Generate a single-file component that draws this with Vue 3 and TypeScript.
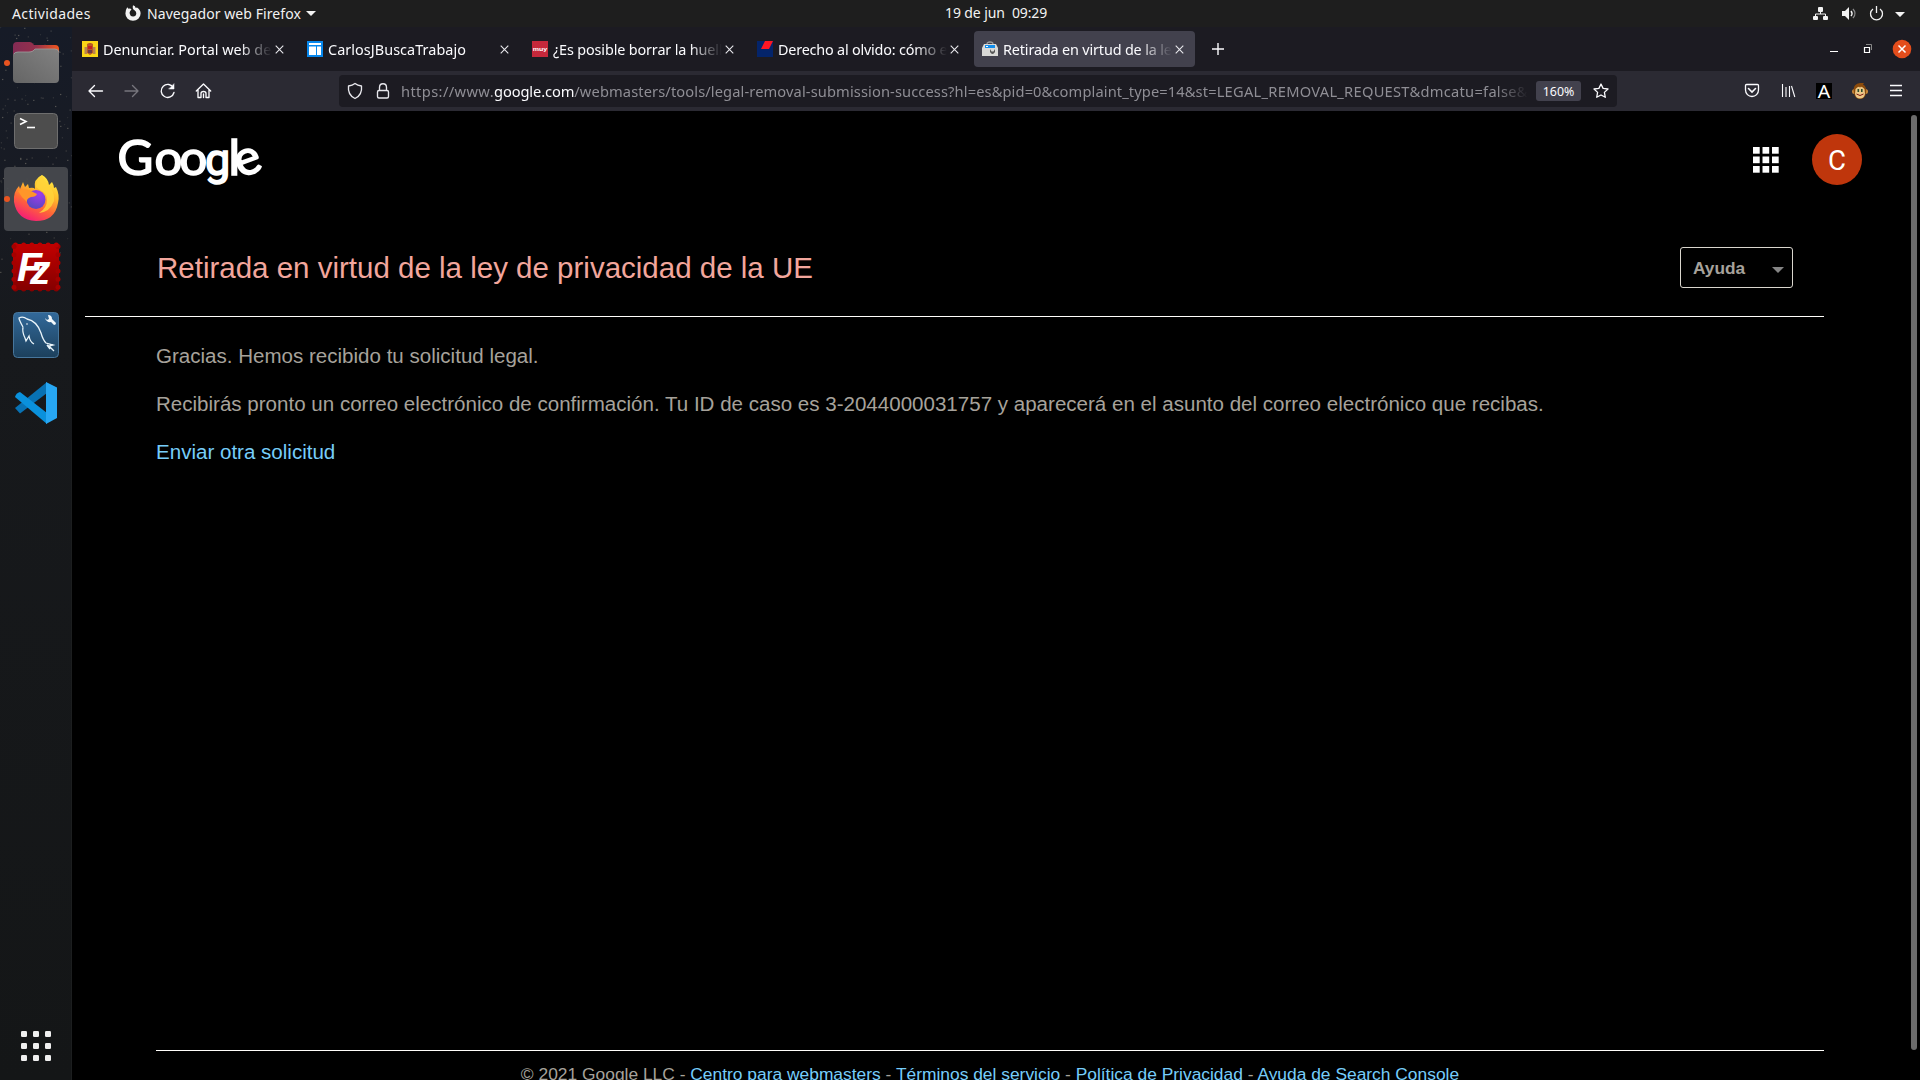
<script setup lang="ts">
interface Tab {
  icon: string
  title: string
  spacing: number
  active?: boolean
}

const tabs: Tab[] = [
  { icon: 'spain', title: 'Denunciar. Portal web de', spacing: 0 },
  { icon: 'grid', title: 'CarlosJBuscaTrabajo', spacing: 0.06 },
  { icon: 'muy', title: '¿Es posible borrar la huella', spacing: -0.14 },
  { icon: 'blue', title: 'Derecho al olvido: cómo el', spacing: -0.2 },
  { icon: 'tools', title: 'Retirada en virtud de la ley', spacing: -0.15, active: true },
]
const nine = Array.from({ length: 9 }, (_, i) => ({ x: i % 3, y: Math.floor(i / 3) }))
const stars = Array.from({ length: 130 }, (_, i) => ({
  x: (i * 47.3 + (i * i * 13) % 31) % 72,
  y: (i * 31.7 + (i * i * 7) % 53) % (i % 4 ? 180 : 260),
  o: 0.12 + ((i * 17) % 10) / 28,
}))
const scallops = Array.from({ length: 6 }, (_, i) => i * 8)
const footer: string[] = ['Centro para webmasters', 'Términos del servicio', 'Política de Privacidad', 'Ayuda de Search Console']
</script>

<template>
  <div class="screen">
    <header class="topbar">
      <span class="activities">Actividades</span>
      <svg class="ffmono" width="16" height="16" viewBox="0 0 16 16"><path fill-rule="evenodd" d="M8 .2Q10.500 1 10.700 3L12 2.500Q15.700 5 15.600 8.500A7.600 7.300 0 0 1 .4 8.500Q.4 5 2.200 2.200L3.500 3.800Q5.500 3 6.500 4.500L5.200 6Q4.200 7.500 4.800 9A3.300 3.300 0 0 0 11.300 8.500Q11.500 6.500 9.500 5.300Q7 4 8 .2Z" fill="#f2f2f2" /></svg>
      <span class="appname">Navegador web Firefox</span>
      <i class="caret"></i>
      <span class="clock">19 de jun&nbsp; 09:29</span>
      <svg class="status" width="95" height="16" viewBox="0 0 95 16">
        <g fill="#f2f2f2"><rect x="5" y="1" width="5" height="5" rx="1" /><rect x="0" y="10" width="5" height="4" rx="1" /><rect x="10" y="10" width="5" height="4" rx="1" /><path d="M29 5h3l4-4v13l-4-4h-3zM82 6h10l-5 5z" /></g>
        <path d="M7.500 5v3M2.500 10V8h10v2" stroke="#f2f2f2" fill="none" />
        <path d="M38 5q2 2.500 0 5" stroke="#f2f2f2" stroke-width="1.500" fill="none" /><path d="M40 3q4 4.500 0 9" stroke="#888" stroke-width="1.300" fill="none" />
        <path d="M60 3a6 6 0 1 0 7 0M63.500 0v7" stroke="#f2f2f2" stroke-width="1.300" fill="none" />
      </svg>
    </header>

    <div class="desktop">
      <aside class="dock">
        <svg width="72" height="1053" viewBox="0 27 72 1053">
          <defs>
            <linearGradient id="fold" x2="1"><stop stop-color="#832b54" /><stop offset=".5" stop-color="#95304c" /><stop offset="1" stop-color="#f2571e" /></linearGradient>
            <linearGradient id="gray" x1="0" y1="1" x2="1" y2="0"><stop stop-color="#656565" /><stop offset="1" stop-color="#818181" /></linearGradient>
            <linearGradient id="fox" x1=".8" y1="0" x2=".3" y2="1"><stop stop-color="#fff044" /><stop offset=".35" stop-color="#ffbd2b" /><stop offset=".65" stop-color="#ff6836" /><stop offset="1" stop-color="#f51979" /></linearGradient>
            <radialGradient id="globe" cx=".65" cy=".2" r=".9"><stop stop-color="#a13bed" /><stop offset="1" stop-color="#5349bb" /></radialGradient>
            <linearGradient id="red" x2="0" y2="1"><stop stop-color="#c20000" /><stop offset="1" stop-color="#850000" /></linearGradient>
            <linearGradient id="sql" x2="0" y2="1"><stop stop-color="#32699a" /><stop offset="1" stop-color="#1c405c" /></linearGradient>
            <linearGradient id="sky" x2="0" y2="1"><stop stop-color="#161b27" /><stop offset=".16" stop-color="#181b23" /><stop offset=".3" stop-color="#17191c" /><stop offset="1" stop-color="#141617" /></linearGradient>
          </defs>
          <rect y="27" width="72" height="1053" fill="url(#sky)" />
          <g fill="#b0aa96"><rect v-for="(s, i) in stars" :key="i" :x="s.x" :y="27 + s.y" width="1.200" height="1.200" :opacity="s.o" /></g>
          <rect x="4" y="167" width="64" height="64" rx="4" fill="#47494e" opacity=".94" />
          <g fill="#e95420"><circle cx="7" cy="63" r="3" /><circle cx="7" cy="199" r="3" /></g>

          <path d="M13 55V46q0-4 4-4h13q2 0 4 3h21q4 0 4 4v8H13Z" fill="url(#fold)" />
          <path d="M13 56q0-4 4-4h12q2 0 4-1l2-2h20q4 0 4 4v26q0 4-4 4H17q-4 0-4-4Z" fill="url(#gray)" />
          <path d="M14 54q1-2 4-2h11q2 0 4-1l2-2h20q3 0 4 3" fill="none" stroke="#a0a0a0" stroke-width=".8" />

          <rect x="14.500" y="113.500" width="43" height="35" rx="4" fill="#4d4d4d" stroke="#6e6e6e" />
          <path d="M20 118.500l6 3-6 3" fill="none" stroke="#fff" stroke-width="1.600" /><path d="M27 127.500h8" stroke="#fff" stroke-width="1.600" />

          <path d="M42 175Q48 178 49 185L52 182Q54 185 54 188L56 187Q60 195 58 203Q55 221 36 221Q17 220 14 202Q13 192 19 186L20 189L23 182L25 187L28 184L29 188Q34 187 35 189Q33 179 42 175Z" fill="url(#fox)" />
          <circle cx="36" cy="199.500" r="9.500" fill="url(#globe)" />
          <path d="M18 191Q24 188 29 190L37 194Q36 197 31 197Q26 199 27 202Q21 197 18 191Z" fill="#ff9629" />
          <path d="M40 190Q47 193 47 200Q47 208 39 213Q50 212 54 201Q55 191 48 185Q45 182 42 175Q36 181 36 187Z" fill="#ffd43a" opacity=".85" />

          <rect x="13" y="244" width="46" height="46" fill="url(#red)" />
          <g v-for="s in scallops" :key="s"><circle :cx="15.500 + s * 1.020" cy="245" r="2.500" fill="#bc0000" /><circle :cx="15.500 + s * 1.020" cy="289" r="2.500" fill="#880000" /><circle cx="14" :cy="246.500 + s * 1.020" r="2.500" fill="#a60000" /><circle cx="58" :cy="246.500 + s * 1.020" r="2.500" fill="#a60000" /></g>
          <text x="17 30" y="281 284" class="fz" font-size="41">Fz</text>

          <rect x="13.500" y="312.500" width="45" height="45" rx="4" fill="url(#sql)" stroke="#47769c" />
          <path d="M23 327Q19 320 19 318Q23 316 27 319Q37 321 41 333Q43 340 46 343L53 345L49 346L54 351M23 327Q22 332 25 338L26 341L29 336Q30 342 34 344M49 346L47 345L50 349" fill="none" stroke="#e9f4fa" stroke-width="1.300" />
          <path d="M45 318a5 5 0 0 0 6 4l3 3q2 0 2-2l-4-4q0-4-4-4l1 4-2 1Z" fill="#f4f9fc" /><circle cx="27" cy="324" r=".8" fill="#fff" />

          <path d="M15 408L20 413.500L47 393V382Z" fill="#0872b4" />
          <path d="M15 397Q16 393 20 392L47 413V424Z" fill="#0a91dc" />
          <path d="M46 382L57 387.500V418L46 424Z" fill="#27a7f3" />

          <g fill="#f0f0f0"><rect v-for="(d, i) in nine" :key="i" :x="21 + d.x * 12" :y="1031 + d.y * 12" width="6" height="6" rx="1.300" /></g>
          <path d="M71.500 440V1080" stroke="#1c1e1f" />
        </svg>
      </aside>

      <main class="browser">
        <div class="tabs">
          <div v-for="t in tabs" :key="t.icon" class="tab" :class="{ active: t.active }">
            <svg width="16" height="16" viewBox="0 0 16 16">
              <template v-if="t.icon === 'spain'"><rect width="16" height="16" fill="#f9d616" /><path d="M5 3l2-1h2l2 1v9l-3 2-3-2z" fill="#b85a25" /><path d="M2.500 6H5v7H2.500zM11 6h2.500v7H11z" fill="#b9834f" /><path d="M6 5h4v3H6z" fill="#c31f20" /><path d="M6 9h4v3H6z" fill="#6d3a43" /></template>
              <template v-else-if="t.icon === 'grid'"><rect width="16" height="16" fill="#0787ec" /><path d="M2 2h12v2H2zM2 5.500h7V14H2zM10 5.500h4V14h-4z" fill="#fff" /></template>
              <template v-else-if="t.icon === 'muy'"><rect width="16" height="16" fill="#c5283b" /><text x=".7" y="9.500" font-family="Liberation Sans" font-size="5.500" font-weight="bold" fill="#fff" textLength="14.500" lengthAdjust="spacingAndGlyphs">muy</text></template>
              <template v-else-if="t.icon === 'blue'"><rect width="16" height="16" fill="#04246a" /><path d="M8 0h8l-4 8H4z" fill="#ff1624" /></template>
              <template v-else><path d="M5 3q0-2 3-2t3 2" fill="none" stroke="#999" stroke-width="1.300" /><path d="M2 3h12l2 4v8H0V7z" fill="#d9d9d7" /><path d="M3 4h10v3H3z" fill="#128deb" /><path d="M4 5h2v1H4z" fill="#fff" /><path d="M8 8v3q2.500 4 5 0V8l-1.500 2.500h-2z" fill="#555" /></template>
            </svg>
            <span class="title" :style="{ letterSpacing: t.spacing + 'px' }">{{ t.title }}</span>
            <svg class="x" width="9" height="9" viewBox="0 0 9 9"><path d="M.7.7l7.600 7.600M8.300.7L.7 8.300" stroke="#e8e8ed" stroke-width="1.100" /></svg>
          </div>
          <svg class="plus" width="12" height="12"><path d="M6 0v12M0 6h12" stroke="#fbfbfe" stroke-width="1.400" /></svg>
          <svg class="winctl" width="84" height="20" viewBox="0 0 84 20" fill="none"><path d="M2 12.500h8" stroke="#fff" /><path d="M38 5.500h5.500V11" stroke="#888" /><path d="M36.500 8.500h5v5h-5z" stroke="#fff" stroke-width="1.200" /><circle cx="74" cy="10" r="9.300" fill="#e34d1c" /><path d="M70.500 6.500l7 7M77.500 6.500l-7 7" stroke="#fff" stroke-width="1.500" /></svg>
        </div>

        <div class="nav">
          <svg class="navicons" width="130" height="20" viewBox="0 0 130 20" fill="none" stroke="#fbfbfe" stroke-width="1.350" stroke-linecap="round" stroke-linejoin="round">
            <path d="M7.500 4.500L2 10l5.500 5.500M2 10h13.500" /><path d="M45.500 4.500l5.500 5.500-5.500 5.500M51 10H38" stroke="#77767d" />
            <path d="M86.500 7A6.500 6.500 0 1 0 87 11.500" /><path d="M87 3v5h-5z" fill="#fbfbfe" stroke-width=".5" />
            <path d="M109.300 10L116.500 3l7.200 7M111 8.500v8h3v-4q0-2 2.500-2t2.500 2v4h3v-8M116.500 13v3.500" />
          </svg>
          <div class="url">
            <svg width="46" height="20" viewBox="0 0 46 20" fill="none" stroke="#e8e8ed" stroke-width="1.350"><path d="M9 2.500Q11.500 4.500 15.500 5Q16.500 14 9 17.500Q1.500 14 2.500 5Q6.500 4.500 9 2.500Z" stroke-linejoin="round" /><rect x="31.500" y="9.500" width="11" height="7.500" rx="1.500" /><path d="M33.500 9V6.500q0-3.800 3.500-3.800t3.500 3.800V9" /></svg>
            <span class="addr"><span class="scheme">https://www.</span><b>google.com</b><span class="path">/webmasters/tools/legal-removal-submission-success?hl=es&amp;pid=0&amp;complaint_type=14&amp;st=</span><span class="query">LEGAL_REMOVAL_REQUEST&amp;dmcatu=false&amp;</span></span>
            <span class="zoom">160%</span>
            <svg width="16" height="16" viewBox="0 0 16 16"><path d="M8 1l2.100 4.400 4.900.6-3.600 3.400.9 4.900L8 12l-4.300 2.300.9-4.900L1 6l4.900-.6z" fill="none" stroke="#fbfbfe" stroke-width="1.300" stroke-linejoin="round" /></svg>
          </div>
          <svg class="ext" width="162" height="20" viewBox="0 0 162 20">
            <g fill="none" stroke="#fbfbfe" stroke-width="1.300"><path d="M2.500 3.500h11q1 0 1 1V9a6.500 6.500 0 0 1-13 0V4.500q0-1 1-1Z" /><path d="M4.500 7.500L8 11l3.500-3.500" stroke-width="1.600" stroke-linecap="round" /><path d="M38.500 3v13M42 6v10M45.500 5v11M47.500 5l3.300 11" stroke-width="1.100" /></g>
            <rect x="72" y="2" width="16" height="16" fill="#000" /><text x="73.800" y="16.500" font-size="18" font-family="Noto Sans" fill="#fff" textLength="12.500" lengthAdjust="spacingAndGlyphs">A</text>
            <circle cx="110.500" cy="10.500" r="2.500" fill="#c8893c" /><circle cx="121.500" cy="10.500" r="2.500" fill="#c8893c" /><path d="M109.500 9q0-6 6.500-7l4 0-1 1.500q4 2 3 8.500-1 6-6 6t-6-6z" fill="#8b4b0c" /><path d="M111.500 8q4-4 4.500-1 .5-3 4.500 1l.5 5q-1 4.500-5 4.500t-5-4.500z" fill="#edc887" /><path d="M113.500 8h1.600v3h-1.600zM117 8h1.600v3h-1.600z" fill="#2b4a2b" /><path d="M112.500 13q3.500 3 7 0" stroke="#7d1710" fill="none" />
            <path d="M146 4.500h12M146 9.500h12M146 14.500h12" stroke="#fbfbfe" stroke-width="1.400" />
          </svg>
        </div>

        <section class="page">
          <div class="goog">
            <svg class="logo" width="150" height="80" viewBox="0 0 150 80"><text x="-1.500 35.500 60.500 86 109.500 121" y="55.500 55.500 55.500 55.500 55.500 59" rotate="0 0 0 0 0 -20">Goo<tspan class="g">g</tspan>le</text></svg>
            <svg class="apps" width="26" height="26" viewBox="0 0 26 26" fill="#fff"><rect v-for="(d, i) in nine" :key="i" :x="d.x * 9.500" :y="d.y * 9.500" width="6.700" height="6.700" /></svg>
            <svg class="avatar" width="50" height="51" viewBox="0 0 50 51"><ellipse cx="25" cy="25.500" rx="25" ry="25.500" fill="#bf360c" /><text x="16" y="36" font-family="Roboto" font-size="28.500" fill="#fff" textLength="18" lengthAdjust="spacingAndGlyphs">C</text></svg>
          </div>
          <div class="heading"><h1>Retirada en virtud de la ley de privacidad de la UE</h1><button>Ayuda<i></i></button></div>
          <div class="copy">
            <p>Gracias. Hemos recibido tu solicitud legal.</p>
            <p>Recibirás pronto un correo electrónico de confirmación. Tu ID de caso es 3-2044000031757 y aparecerá en el asunto del correo electrónico que recibas.</p>
            <p><a>Enviar otra solicitud</a></p>
          </div>
          <footer><span>© 2021 Google LLC<template v-for="f in footer" :key="f"> - <a>{{ f }}</a></template></span></footer>
          <div class="scroll"></div>
        </section>
      </main>
    </div>
  </div>
</template>

<style>
body { margin: 0; background: #000; overflow: hidden; }
</style>
<style scoped>
* { box-sizing: border-box; }
svg { display: block; flex: none; }
.screen { width: 1920px; height: 1080px; overflow: hidden; display: flex; flex-direction: column; font-family: "Noto Sans", "Open Sans", sans-serif; font-size: 14px; color: #fbfbfe; white-space: nowrap; }
.topbar { height: 27px; flex: none; display: flex; align-items: center; background: #1e1e1e; color: #f2f2f2; position: relative; }
.activities { margin-left: 12px; width: 113px; letter-spacing: .36px; }
.appname { margin-left: 6px; width: 155px; letter-spacing: .08px; }
.ffmono { margin-top: -1px; }
.caret { margin-left: 4px; border: 5px solid transparent; border-top-color: #f2f2f2; border-bottom: 0; }
.clock { position: absolute; left: 945px; top: 3px; letter-spacing: -.1px; }
.status { margin-left: auto; margin-right: 12px; }
.desktop { flex: 1; display: flex; min-height: 0; }
.dock { width: 72px; flex: none; }
.browser { flex: 1; min-width: 0; display: flex; flex-direction: column; }
.tabs { height: 44px; flex: none; background: #1c1b22; display: flex; align-items: center; padding-left: 2px; gap: 4px; }
.tab { width: 221px; height: 36px; border-radius: 4px; display: flex; align-items: center; padding: 0 11px 0 8px; }
.active { background: #42414d; }
.title { margin-left: 5px; flex: 1; min-width: 0; overflow: hidden; font-size: 14.4px; mask-image: linear-gradient(to right, #000 calc(100% - 32px), transparent); }
.x { margin-left: 3px; }
.plus { margin-left: 13px; }
.winctl { margin-left: auto; margin-right: 8px; }
.nav { height: 40px; flex: none; background: #2b2a33; display: flex; align-items: center; }
.navicons { margin-left: 15px; }
.url { margin-left: 122px; width: 1278px; height: 32px; border-radius: 4px; background: #1c1b22; display: flex; align-items: center; padding-left: 7px; }
.addr { margin-left: 9px; width: 1127px; overflow: hidden; font-size: 14.67px; color: #8f8e95; mask-image: linear-gradient(to right, #000 calc(100% - 32px), transparent); }
.addr b { font-weight: 400; color: #fbfbfe; letter-spacing: -.1px; }
.scheme { letter-spacing: .38px; }
.path { letter-spacing: .11px; }
.query { letter-spacing: .27px; }
.zoom { margin: 0 12px 0 8px; width: 45px; height: 20px; line-height: 21px; text-align: center; background: #42414d; border-radius: 3px; font-size: 12.4px; flex: none; }
.ext { margin-left: 127px; }
.page { flex: 1; position: relative; background: #000; font-family: "Liberation Sans", Arial, sans-serif; display: flex; flex-direction: column; min-height: 0; }
.goog { height: 96px; display: flex; align-items: center; padding-left: 47px; flex: none; }
.logo text { font-family: Lato, sans-serif; font-weight: 400; font-size: 49px; fill: #fff; stroke: #fff; stroke-width: 1.6px; }
.logo .g { font-family: Roboto, sans-serif; font-size: 45px; }
.apps { margin-left: auto; margin-top: 1px; }
.avatar { margin-left: 33px; margin-right: 58px; }
.heading { height: 110px; flex: none; width: 1739px; margin-left: 13px; border-bottom: 1px solid #fffefa; display: flex; justify-content: space-between; padding: 40px 31px 0 72px; }
h1 { margin: 1px 0 0; font-size: 29.5px; line-height: 40px; font-weight: 400; color: #f2a69c; }
button { width: 113px; height: 41px; border: 1px solid #dad6ce; border-radius: 3px; background: #000; color: #a6a29b; font: bold 17.3px "Liberation Sans"; display: flex; align-items: center; justify-content: space-between; padding: 1px 8px 0 12px; }
button i { border: 6px solid transparent; border-top-color: #858585; border-bottom: 0; margin-top: 3px; }
.copy { padding: 27px 0 0 84px; font-size: 20.55px; color: #a6a29b; }
p { margin: 0 0 24px; line-height: 24px; }
a { color: #76cdfa; }
footer { margin: auto 96px 0 84px; height: 30px; border-top: 1px solid #fffefa; text-align: center; font-size: 17.4px; line-height: 20px; padding-top: 13px; color: #a6a29b; overflow: hidden; }
.scroll { position: absolute; right: 3px; top: 4px; width: 6px; height: 935px; border-radius: 3px; background: #6b6b6b; }
.fz { font-family: "Liberation Sans"; font-weight: 700; font-style: italic; fill: #fff; }
</style>
